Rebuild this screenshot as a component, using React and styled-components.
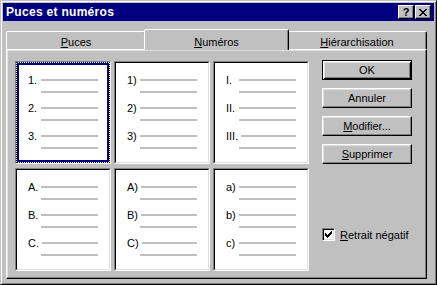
import React from 'react';
import styled, { createGlobalStyle, css } from 'styled-components';

const GlobalStyle = createGlobalStyle`
  html, body {
    margin: 0;
    padding: 0;
    background: #c0c0c0;
  }
  body {
    font-family: "Liberation Sans", Arial, sans-serif;
    font-size: 11px;
    color: #000;
  }
`;

const Window = styled.div`
  box-sizing: border-box;
  width: 437px;
  height: 285px;
  background: #c0c0c0;
  border: 1px solid;
  border-color: #c0c0c0 #000 #000 #c0c0c0;
  box-shadow: inset 1px 1px #fff, inset -1px -1px #808080;
  padding: 2px;
  display: flex;
  flex-direction: column;
`;

const TitleBar = styled.div`
  height: 18px;
  flex: none;
  background: #000080;
  display: flex;
  align-items: center;
  padding: 0 3px 0 3px;
`;

const Title = styled.div`
  flex: 1;
  color: #fff;
  font-weight: bold;
  font-size: 12px;
  letter-spacing: 0.3px;
`;

const CaptionButtons = styled.div`
  display: flex;
  gap: 1px;
`;

const CaptionButton = styled.div`
  box-sizing: border-box;
  width: 16px;
  height: 14px;
  background: #c0c0c0;
  border: 1px solid;
  border-color: #fff #000 #000 #fff;
  box-shadow: inset -1px -1px #808080;
  display: flex;
  align-items: center;
  justify-content: center;
  font-weight: bold;
  font-size: 11px;
  line-height: 11px;
`;

const Body = styled.div`
  flex: 1;
  display: flex;
  flex-direction: column;
  padding: 8px 7px 3px 3px;
`;

const TabStrip = styled.div`
  display: flex;
  align-items: flex-end;
  height: 20px;
  position: relative;
  z-index: 1;
`;

const Tab = styled.div`
  box-sizing: border-box;
  width: ${p => p.$w}px;
  height: 18px;
  background: #c0c0c0;
  border: 1px solid;
  border-bottom: none;
  border-color: #fff #000 transparent #fff;
  border-radius: 2px 2px 0 0;
  box-shadow: inset -1px 0 #808080;
  padding-top: 4px;
  line-height: 12px;
  text-align: center;
  ${p => p.$selected && css`
    width: ${p.$w + 4}px;
    height: 21px;
    margin: 0 -2px -1px -2px;
    padding-top: 6px;
    position: relative;
    z-index: 2;
  `}
`;

const Panel = styled.div`
  flex: 1;
  width: 421px;
  box-sizing: border-box;
  border: 1px solid;
  border-color: #fff #000 #000 #fff;
  box-shadow: inset -1px -1px #808080, inset 1px 1px #dfdfdf;
  padding: 11px 0 0 8px;
  display: flex;
  align-items: flex-start;
`;

const Gallery = styled.div`
  display: grid;
  grid-template-columns: repeat(3, 96px);
  grid-template-rows: repeat(2, 103px);
  column-gap: 3px;
  row-gap: 4px;
`;

const Cell = styled.div`
  box-sizing: border-box;
  border: 1px solid;
  border-color: #808080 #fff #fff #808080;
  background: #fff;
  display: flex;
`;

const Frame = styled.div`
  flex: 1;
  border: 1px solid;
  border-color: #000 #dfdfdf #dfdfdf #000;
  padding: 11px 11px 0 11px;
  ${p => p.$selected && css`
    border: 1px dotted #000;
    box-shadow: inset 0 0 0 2px #000080;
  `}
`;

const Item = styled.div`
  margin-bottom: 4px;
`;

const ItemRow = styled.div`
  display: flex;
  align-items: center;
  height: 12px;
`;

const Num = styled.span`
  min-width: 10px;
  margin-right: 3px;
  line-height: 12px;
  font-size: 11px;
`;

const Rule = styled.div`
  flex: 1;
  height: 2px;
  background: #c0c0c0;
  margin-left: ${p => p.$indent || 0}px;
`;

const Side = styled.div`
  width: 90px;
  margin-left: 13px;
  margin-top: -1px;
  display: flex;
  flex-direction: column;
  gap: 8px;
`;

const Button = styled.div`
  box-sizing: border-box;
  height: 20px;
  background: #c0c0c0;
  border: 1px solid;
  border-color: #fff #000 #000 #fff;
  box-shadow: inset -1px -1px #808080, inset 1px 1px #dfdfdf;
  display: flex;
  align-items: center;
  justify-content: center;
  ${p => p.$default && css`
    border: 1px solid #000;
    box-shadow: inset 1px 1px #fff, inset -1px -1px #000, inset 2px 2px #dfdfdf, inset -2px -2px #808080;
  `}
`;

const CheckRow = styled.div`
  display: flex;
  align-items: center;
  margin-top: 56px;
`;

const CheckBox = styled.div`
  box-sizing: border-box;
  width: 13px;
  height: 13px;
  background: #fff;
  border: 1px solid;
  border-color: #808080 #fff #fff #808080;
  box-shadow: inset 1px 1px #000, inset -1px -1px #dfdfdf;
  display: flex;
  align-items: center;
  justify-content: center;
`;

const CheckLabel = styled.span`
  margin-left: 5px;
`;

const Key = styled.u`
  text-decoration: underline;
  text-underline-offset: 1px;
`;

const PixelIcon = ({ rows }) => (
  <svg width={rows[0].length} height={rows.length} shapeRendering="crispEdges">
    {rows.map((r, y) =>
      r.split('').map((c, x) =>
        c === 'X' ? <rect key={`${x}-${y}`} x={x} y={y} width="1" height="1" fill="#000" /> : null
      )
    )}
  </svg>
);

const closeGlyph = [
  'XX....XX',
  '.XX..XX.',
  '..XXXX..',
  '...XX...',
  '..XXXX..',
  '.XX..XX.',
  'XX....XX',
];

const checkGlyph = [
  '......X',
  '.....XX',
  'X...XXX',
  'XX.XXX.',
  'XXXXX..',
  '.XXX...',
  '..X....',
];

const styles = [
  ['1.', '2.', '3.'],
  ['1)', '2)', '3)'],
  ['I.', 'II.', 'III.'],
  ['A.', 'B.', 'C.'],
  ['A)', 'B)', 'C)'],
  ['a)', 'b)', 'c)'],
];

function App() {
  return (
    <>
      <GlobalStyle />
      <Window>
        <TitleBar>
          <Title>Puces et numéros</Title>
          <CaptionButtons>
            <CaptionButton>?</CaptionButton>
            <CaptionButton><PixelIcon rows={closeGlyph} /></CaptionButton>
          </CaptionButtons>
        </TitleBar>
        <Body>
          <TabStrip>
            <Tab $w={140}><Key>P</Key>uces</Tab>
            <Tab $w={141} $selected><Key>N</Key>uméros</Tab>
            <Tab $w={140}><Key>H</Key>iérarchisation</Tab>
          </TabStrip>
          <Panel>
            <Gallery>
              {styles.map((labels, i) => (
                <Cell key={i}>
                  <Frame $selected={i === 0}>
                    {labels.map(l => (
                      <Item key={l}>
                        <ItemRow>
                          <Num>{l}</Num>
                          <Rule />
                        </ItemRow>
                        <ItemRow>
                          <Rule $indent={13} />
                        </ItemRow>
                      </Item>
                    ))}
                  </Frame>
                </Cell>
              ))}
            </Gallery>
            <Side>
              <Button $default>OK</Button>
              <Button>Annuler</Button>
              <Button><Key>M</Key>odifier...</Button>
              <Button><Key>S</Key>upprimer</Button>
              <CheckRow>
                <CheckBox><PixelIcon rows={checkGlyph} /></CheckBox>
                <CheckLabel><Key>R</Key>etrait négatif</CheckLabel>
              </CheckRow>
            </Side>
          </Panel>
        </Body>
      </Window>
    </>
  );
}

export default App;
